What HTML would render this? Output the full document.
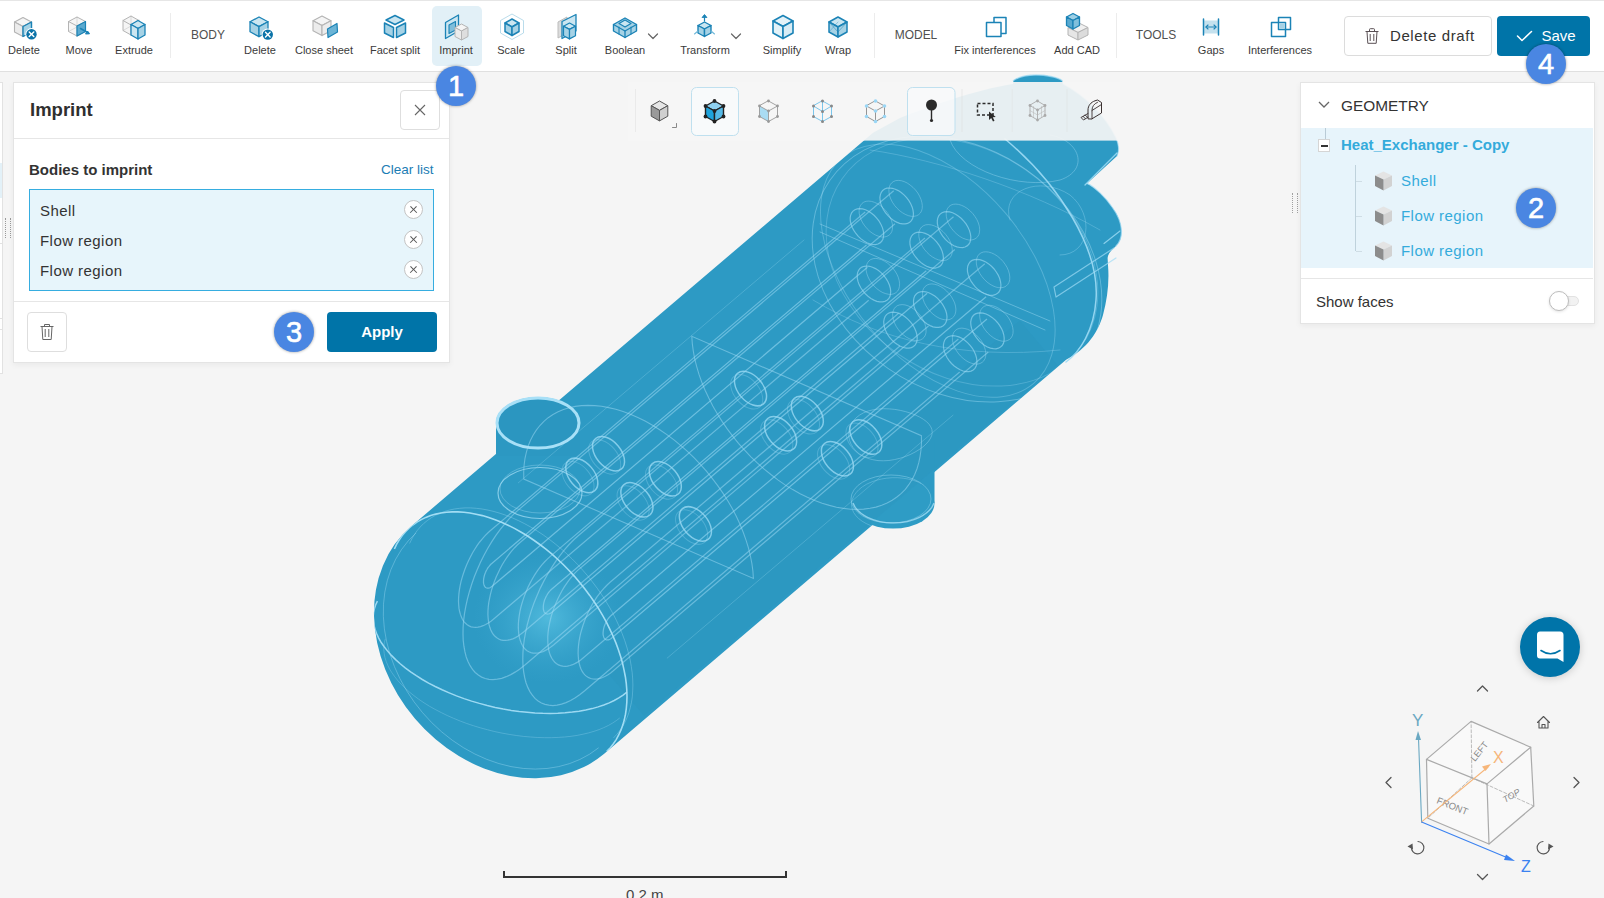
<!DOCTYPE html>
<html><head><meta charset="utf-8">
<style>
*{box-sizing:border-box;margin:0;padding:0}
html,body{width:1604px;height:898px;overflow:hidden;background:#f5f5f5;font-family:"Liberation Sans",sans-serif;color:#333}
.abs{position:absolute}
#tb{position:absolute;left:0;top:0;width:1604px;height:72px;background:#fff}
.lbl{position:absolute;top:44px;font-size:11px;color:#3a3a3a;white-space:nowrap;transform:translateX(-50%)}
.sec{position:absolute;top:27px;font-size:13px;color:#505050;white-space:nowrap;transform:translateX(-50%) scaleX(0.92)}
.sep{position:absolute;top:13px;width:1px;height:45px;background:#ececec}
.ic{position:absolute;top:13px;width:28px;height:28px;transform:translateX(-50%)}
.badge{position:absolute;width:40px;height:40px;border-radius:50%;background:#4a86e2;color:#fff;font-size:29px;text-align:center;line-height:41px;-webkit-text-stroke:0.6px #fff;box-shadow:0 0 3px rgba(0,0,0,.4)}
.item{font-size:15px;color:#333;white-space:nowrap;letter-spacing:0.45px}
.gi{font-size:15px;color:#34abdb;white-space:nowrap;letter-spacing:0.45px}
.xc{width:19px;height:19px;border:1px solid #c4c4c4;border-radius:50%;background:#fff}
.xc:before,.xc:after{content:"";position:absolute;left:4px;top:8px;width:9px;height:1.4px;background:#555;transform:rotate(45deg)}
.xc:after{transform:rotate(-45deg)}
</style></head><body>
<!-- 3D model -->
<svg class="abs" style="left:0;top:0" width="1604" height="898" id="model">
<defs>
<radialGradient id="ghi" gradientUnits="objectBoundingBox" cx="0.5" cy="0.5" r="0.5">
<stop offset="0" stop-color="#5cc4e4" stop-opacity="0.75"/><stop offset="1" stop-color="#3aa6cf" stop-opacity="0"/></radialGradient>
<clipPath id="clipbody"><path d="M410.7,526.7 L873.1,132.8 L900,118 C930,106 975,90 1013,84 L1013.5,80.5 C1020,76 1030,75 1036,75 C1045,75 1058,77 1062,80.5 L1063,84 C1085,96 1105,115 1116,138 C1119,145 1119,152 1117,156 L1087,183.4 C1095,187 1106,198 1112,207 C1118,215 1121,222 1121.5,231 C1121.5,238 1120,242 1116,246 C1112,250 1108,253 1107.6,258 L1108.3,270 C1109,285 1107,300 1103,315 C1098,332 1088,348 1066.1,359.8 L603.9,754.1 A122,149.2 -40.36 0 1 410.7,526.7 Z"/></clipPath>
</defs>
<path d="M410.7,526.7 L873.1,132.8 L900,118 C930,106 975,90 1013,84 L1013.5,80.5 C1020,76 1030,75 1036,75 C1045,75 1058,77 1062,80.5 L1063,84 C1085,96 1105,115 1116,138 C1119,145 1119,152 1117,156 L1087,183.4 C1095,187 1106,198 1112,207 C1118,215 1121,222 1121.5,231 C1121.5,238 1120,242 1116,246 C1112,250 1108,253 1107.6,258 L1108.3,270 C1109,285 1107,300 1103,315 C1098,332 1088,348 1066.1,359.8 L603.9,754.1 A122,149.2 -40.36 0 1 410.7,526.7 Z" fill="#2d9ac4"/>
<path d="M496,423 L496,456 L580,456 L580,423 Z" fill="#2c98c2"/>
<ellipse cx="538" cy="423" rx="42" ry="26" fill="#2b96c0"/>
<path d="M852,440 L934.5,440 L934.5,503 L852,503 Z" fill="#2d9ac4"/>
<ellipse cx="893" cy="503.2" rx="41.5" ry="25.4" fill="#2e9cc5"/>
<ellipse cx="548" cy="618" rx="75" ry="65" fill="url(#ghi)"/>
<path d="M644.1,715.8 L1057.2,364.8 L1019.6,320.6 L606.5,671.6 Z" fill="#258db6" opacity="0.15"/>
<g clip-path="url(#clipbody)">
<path d="M866.5,244.9 L491.5,563.7 L491.5,563.7 L490.8,564.3 L490.2,565.0 L489.5,565.8 L488.9,566.6 L488.2,567.4 L487.6,568.3 L487.1,569.3 L486.5,570.3 L486.0,571.3 L485.6,572.3 L485.1,573.4 L484.7,574.5 L484.4,575.5 L484.1,576.6 L483.9,577.7 L483.7,578.7 L483.6,579.7 L483.5,580.7 L483.5,581.6 L483.5,582.5 L483.6,583.4 L483.8,584.2 L484.0,584.9 L484.2,585.6 L484.5,586.2 L484.9,586.7 L485.3,587.2 L485.7,587.5 L486.2,587.8 L486.7,588.0 L487.2,588.2 L487.8,588.2 L488.4,588.1 L489.1,588.0 L489.7,587.8 L490.4,587.5 L491.0,587.1 L491.7,586.6 L492.4,586.1 L492.4,586.1 L867.4,267.3" fill="none" stroke="#9fdcf5" stroke-width="1.25" opacity="0.55"/>
<path d="M865.2,212.0 L490.2,530.8 L490.2,530.8 L487.5,533.2 L484.9,535.9 L482.3,538.8 L479.7,542.0 L477.2,545.4 L474.9,549.0 L472.6,552.8 L470.5,556.7 L468.5,560.7 L466.7,564.8 L465.0,569.0 L463.5,573.2 L462.2,577.4 L461.0,581.6 L460.1,585.8 L459.4,589.9 L458.9,593.9 L458.6,597.8 L458.5,601.5 L458.7,605.0 L459.0,608.4 L459.6,611.5 L460.4,614.4 L461.4,617.1 L462.5,619.5 L463.9,621.6 L465.5,623.3 L467.2,624.8 L469.1,625.9 L471.1,626.8 L473.3,627.2 L475.6,627.4 L478.0,627.2 L480.5,626.6 L483.1,625.7 L485.7,624.5 L488.3,623.0 L491.0,621.2 L493.7,619.0 L493.7,619.0 L868.7,300.2" fill="none" stroke="#9fdcf5" stroke-width="1.25" opacity="0.5"/>
<path d="M926.3,270.8 L551.3,589.6 L551.3,589.6 L550.6,590.2 L550.0,590.9 L549.3,591.6 L548.7,592.4 L548.0,593.3 L547.4,594.2 L546.9,595.2 L546.3,596.2 L545.8,597.2 L545.4,598.2 L544.9,599.3 L544.5,600.3 L544.2,601.4 L543.9,602.5 L543.7,603.5 L543.5,604.6 L543.4,605.6 L543.3,606.6 L543.3,607.5 L543.3,608.4 L543.4,609.3 L543.6,610.1 L543.8,610.8 L544.0,611.5 L544.3,612.1 L544.7,612.6 L545.1,613.0 L545.5,613.4 L546.0,613.7 L546.5,613.9 L547.0,614.0 L547.6,614.1 L548.2,614.0 L548.9,613.9 L549.5,613.7 L550.2,613.4 L550.8,613.0 L551.5,612.5 L552.2,612.0 L552.2,612.0 L927.2,293.2" fill="none" stroke="#9fdcf5" stroke-width="1.25" opacity="0.55"/>
<path d="M925.0,237.9 L550.0,556.6 L550.0,556.6 L547.3,559.1 L544.7,561.8 L542.1,564.7 L539.5,567.9 L537.0,571.3 L534.7,574.9 L532.4,578.7 L530.3,582.6 L528.3,586.6 L526.5,590.7 L524.8,594.9 L523.3,599.1 L522.0,603.3 L520.8,607.5 L519.9,611.7 L519.2,615.8 L518.7,619.8 L518.4,623.6 L518.3,627.4 L518.5,630.9 L518.8,634.3 L519.4,637.4 L520.2,640.3 L521.2,643.0 L522.3,645.3 L523.7,647.4 L525.3,649.2 L527.0,650.7 L528.9,651.8 L530.9,652.6 L533.1,653.1 L535.4,653.2 L537.8,653.0 L540.3,652.5 L542.9,651.6 L545.5,650.4 L548.1,648.9 L550.8,647.0 L553.5,644.9 L553.5,644.9 L928.5,326.1" fill="none" stroke="#9fdcf5" stroke-width="1.25" opacity="0.5"/>
<path d="M986.1,296.7 L611.1,615.5 L611.1,615.5 L610.4,616.1 L609.8,616.8 L609.1,617.5 L608.5,618.3 L607.8,619.2 L607.2,620.1 L606.7,621.1 L606.1,622.0 L605.6,623.1 L605.2,624.1 L604.7,625.2 L604.3,626.2 L604.0,627.3 L603.7,628.4 L603.5,629.4 L603.3,630.5 L603.2,631.5 L603.1,632.4 L603.1,633.4 L603.1,634.3 L603.2,635.1 L603.4,635.9 L603.6,636.7 L603.8,637.3 L604.1,637.9 L604.5,638.5 L604.9,638.9 L605.3,639.3 L605.8,639.6 L606.3,639.8 L606.8,639.9 L607.4,639.9 L608.0,639.9 L608.7,639.8 L609.3,639.5 L610.0,639.2 L610.7,638.8 L611.3,638.4 L612.0,637.8 L612.0,637.8 L987.0,319.1" fill="none" stroke="#9fdcf5" stroke-width="1.25" opacity="0.55"/>
<path d="M984.8,263.7 L609.8,582.5 L609.8,582.5 L607.1,585.0 L604.5,587.7 L601.9,590.6 L599.3,593.8 L596.8,597.2 L594.5,600.8 L592.2,604.5 L590.1,608.4 L588.1,612.5 L586.3,616.6 L584.6,620.7 L583.1,625.0 L581.8,629.2 L580.6,633.4 L579.7,637.6 L579.0,641.7 L578.5,645.6 L578.2,649.5 L578.1,653.2 L578.3,656.8 L578.6,660.2 L579.2,663.3 L580.0,666.2 L581.0,668.9 L582.1,671.2 L583.5,673.3 L585.1,675.1 L586.8,676.6 L588.7,677.7 L590.7,678.5 L592.9,679.0 L595.2,679.1 L597.6,678.9 L600.1,678.4 L602.7,677.5 L605.3,676.3 L608.0,674.8 L610.6,672.9 L613.3,670.8 L613.3,670.8 L988.3,352.0" fill="none" stroke="#9fdcf5" stroke-width="1.25" opacity="0.5"/>
<path d="M895.0,223.7 L520.1,542.5 L520.1,542.5 L517.3,545.0 L514.6,547.7 L512.0,550.7 L509.4,553.9 L506.9,557.4 L504.5,561.0 L502.2,564.8 L500.1,568.8 L498.1,572.9 L496.2,577.0 L494.5,581.3 L493.0,585.5 L491.6,589.8 L490.5,594.1 L489.6,598.3 L488.8,602.4 L488.3,606.5 L488.0,610.4 L487.9,614.2 L488.1,617.8 L488.5,621.2 L489.0,624.4 L489.8,627.3 L490.8,630.0 L492.0,632.4 L493.4,634.5 L495.0,636.3 L496.8,637.8 L498.7,639.0 L500.7,639.8 L502.9,640.3 L505.3,640.4 L507.7,640.2 L510.2,639.7 L512.8,638.8 L515.5,637.6 L518.2,636.0 L520.9,634.1 L523.6,632.0 L523.6,632.0 L898.6,313.2" fill="none" stroke="#9fdcf5" stroke-width="1.25" opacity="0.5"/>
<path d="M893.7,190.8 L518.7,509.6 L518.7,509.6 L514.0,513.9 L509.3,518.6 L504.8,523.8 L500.3,529.4 L495.9,535.4 L491.8,541.7 L487.8,548.3 L484.0,555.2 L480.5,562.3 L477.3,569.5 L474.3,576.8 L471.7,584.3 L469.4,591.7 L467.4,599.1 L465.8,606.4 L464.5,613.6 L463.6,620.7 L463.1,627.5 L463.0,634.1 L463.2,640.3 L463.9,646.2 L464.9,651.7 L466.2,656.9 L468.0,661.5 L470.1,665.7 L472.5,669.4 L475.2,672.5 L478.3,675.1 L481.6,677.1 L485.2,678.5 L489.0,679.4 L493.0,679.6 L497.3,679.2 L501.7,678.3 L506.2,676.7 L510.8,674.6 L515.5,671.9 L520.2,668.7 L524.9,664.9 L524.9,664.9 L899.9,346.1" fill="none" stroke="#9fdcf5" stroke-width="1.25" opacity="0.5"/>
<path d="M954.8,249.6 L579.9,568.4 L579.9,568.4 L577.1,570.9 L574.4,573.6 L571.8,576.6 L569.2,579.8 L566.7,583.3 L564.3,586.9 L562.0,590.7 L559.9,594.7 L557.9,598.7 L556.0,602.9 L554.3,607.1 L552.8,611.4 L551.4,615.7 L550.3,620.0 L549.4,624.2 L548.6,628.3 L548.1,632.4 L547.8,636.3 L547.8,640.1 L547.9,643.7 L548.3,647.1 L548.8,650.3 L549.6,653.2 L550.6,655.9 L551.8,658.3 L553.2,660.4 L554.8,662.2 L556.6,663.7 L558.5,664.9 L560.5,665.7 L562.7,666.2 L565.1,666.3 L567.5,666.1 L570.0,665.5 L572.6,664.7 L575.3,663.4 L578.0,661.9 L580.7,660.0 L583.4,657.8 L583.4,657.8 L958.4,339.1" fill="none" stroke="#9fdcf5" stroke-width="1.25" opacity="0.5"/>
<path d="M953.5,216.7 L578.5,535.5 L578.5,535.5 L573.8,539.7 L569.1,544.5 L564.6,549.7 L560.1,555.3 L555.7,561.3 L551.6,567.6 L547.6,574.2 L543.8,581.1 L540.3,588.1 L537.1,595.4 L534.1,602.7 L531.5,610.1 L529.2,617.6 L527.2,625.0 L525.6,632.3 L524.3,639.5 L523.4,646.6 L522.9,653.4 L522.8,659.9 L523.0,666.2 L523.7,672.1 L524.7,677.6 L526.0,682.7 L527.8,687.4 L529.9,691.6 L532.3,695.2 L535.0,698.4 L538.1,701.0 L541.4,703.0 L545.0,704.4 L548.8,705.2 L552.8,705.5 L557.1,705.1 L561.5,704.2 L566.0,702.6 L570.6,700.5 L575.3,697.8 L580.0,694.6 L584.7,690.8 L584.7,690.8 L959.7,372.0" fill="none" stroke="#9fdcf5" stroke-width="1.25" opacity="0.5"/>
<path d="M518.3,482.8 L804.0,240.0" fill="none" stroke="#9fdcf5" stroke-width="0.9" opacity="0.3" stroke-linecap="round"/>
<path d="M667.2,658.1 L953.0,415.2" fill="none" stroke="#9fdcf5" stroke-width="0.9" opacity="0.3" stroke-linecap="round"/>
<path d="M394.4,549.0 L396.7,544.2 L399.3,539.8 L402.2,535.6 L405.5,531.8 L409.0,528.2 L412.8,525.0 L416.9,522.1 L421.2,519.6 L425.8,517.4 L430.7,515.6 L435.7,514.1 L441.0,513.0 L446.5,512.2 L452.1,511.9 L457.9,511.9 L463.9,512.3 L469.9,513.0 L476.1,514.2 L482.4,515.6 L488.7,517.5 L495.1,519.7 L501.5,522.3 L508.0,525.2 L514.4,528.4 L520.8,532.0 L527.2,535.8 L533.5,540.0 L539.8,544.5 L545.9,549.2 L552.0,554.2 L557.9,559.5 L563.7,565.0 L569.3,570.7 L574.7,576.6 L579.9,582.7 L584.9,589.0 L589.7,595.4 L594.3,602.0 L598.6,608.6 L602.6,615.4 L606.4,622.2 L609.8,629.1 L613.0,636.0 L615.9,642.9 L618.4,649.8 L620.7,656.7 L622.6,663.5 L624.1,670.3 L625.4,677.0 L626.3,683.6 L626.8,690.0 L627.0,696.4 L626.8,702.5 L626.3,708.5 L625.5,714.2 L624.3,719.8 L622.8,725.1 L620.9,730.2 L618.7,735.0 L616.2,739.6 L613.4,743.8 L610.3,747.8 L606.8,751.4" fill="none" stroke="#a8e0f7" stroke-width="1.6" opacity="0.95"/>
<path d="M409.6,543.5 L411.8,539.0 L414.3,534.7 L417.1,530.7 L420.2,527.0 L423.6,523.6 L427.3,520.5 L431.2,517.8 L435.4,515.3 L439.8,513.2 L444.4,511.5 L449.3,510.1 L454.4,509.0 L459.6,508.3 L465.0,507.9 L470.6,507.9 L476.3,508.3 L482.1,509.0 L488.0,510.1 L494.0,511.5 L500.1,513.3 L506.3,515.4 L512.4,517.9 L518.6,520.7 L524.8,523.8 L531.0,527.2 L537.1,530.9 L543.2,534.9 L549.2,539.2 L555.1,543.8 L560.9,548.6 L566.6,553.6 L572.1,558.9 L577.5,564.4 L582.7,570.1 L587.7,575.9 L592.5,582.0 L597.1,588.1 L601.5,594.4 L605.6,600.8 L609.5,607.3 L613.1,613.8 L616.4,620.4 L619.5,627.1 L622.2,633.7 L624.7,640.4 L626.8,647.0 L628.6,653.5 L630.2,660.0 L631.3,666.5 L632.2,672.8 L632.7,679.0 L632.9,685.0 L632.7,690.9 L632.3,696.7 L631.5,702.2 L630.3,707.5 L628.9,712.7 L627.1,717.5 L625.0,722.2 L622.6,726.5 L619.8,730.6 L616.8,734.4 L613.5,737.9" fill="none" stroke="#9fdcf5" stroke-width="1" opacity="0.35"/>
<path d="M626.9,692.2 L623.1,695.1 L618.8,697.9 L614.2,700.5 L609.2,702.9 L603.8,705.0 L598.1,706.9 L592.1,708.6 L585.7,710.0 L579.1,711.2 L572.3,712.1 L565.1,712.8 L557.8,713.2 L550.3,713.4 L542.7,713.3 L534.9,713.0 L527.1,712.3 L519.1,711.5 L511.2,710.4 L503.2,709.0 L495.2,707.4 L487.2,705.5 L479.4,703.4 L471.6,701.1 L464.0,698.6 L456.5,695.9 L449.2,692.9 L442.1,689.8 L435.2,686.5 L428.6,683.1 L422.3,679.5 L416.3,675.7 L410.6,671.9 L405.2,667.9 L400.2,663.8 L395.6,659.6 L391.4,655.4 L387.6,651.1 L384.2,646.8 L381.2,642.5 L378.7,638.1 L376.7,633.8 L375.1,629.4 L374.0,625.2 L373.4,620.9 L373.2,616.8 L373.6,612.7 L374.4,608.7 L375.6,604.9 L377.4,601.1" fill="none" stroke="#a8e0f7" stroke-width="1.5" opacity="0.9"/>
<path d="M619.7,718.0 L616.3,720.6 L612.5,723.1 L608.3,725.5 L603.9,727.6 L599.1,729.6 L594.0,731.3 L588.6,732.9 L583.0,734.2 L577.1,735.4 L571.0,736.3 L564.6,737.0 L558.1,737.4 L551.5,737.7 L544.6,737.7 L537.7,737.5 L530.6,737.0 L523.5,736.4 L516.4,735.5 L509.2,734.4 L502.0,733.1 L494.8,731.6 L487.7,729.8 L480.6,727.9 L473.7,725.8 L466.8,723.5 L460.1,721.0 L453.6,718.3 L447.2,715.5 L441.1,712.5 L435.1,709.4 L429.4,706.2 L424.0,702.8 L418.8,699.3 L414.0,695.7 L409.5,692.1 L405.3,688.3 L401.4,684.5 L397.9,680.7 L394.8,676.8 L392.0,672.9 L389.6,669.0 L387.7,665.1 L386.1,661.2 L384.9,657.3 L384.2,653.5 L383.8,649.7 L383.9,646.0 L384.4,642.4 L385.3,638.8" fill="none" stroke="#9fdcf5" stroke-width="1" opacity="0.3"/>
<path d="M598.6,747.8 A114,141 -40.36 0 1 416.0,533.0" fill="none" stroke="#9fdcf5" stroke-width="1" opacity="0.4"/>
<path d="M753.4,578.5 L752.9,571.1 L751.9,563.6 L750.4,556.0 L748.5,548.2 L746.1,540.3 L743.3,532.5 L740.1,524.5 L736.4,516.6 L732.4,508.8 L727.9,501.0 L723.1,493.4 L717.9,485.9 L712.4,478.6 L706.6,471.4 L700.6,464.6 L694.2,457.9 L687.7,451.6 L680.9,445.6 L674.0,439.9 L666.9,434.6 L659.7,429.7 L652.5,425.2 L645.1,421.1 L637.8,417.5 L630.4,414.3 L623.1,411.6 L615.8,409.3 L608.6,407.6 L601.6,406.3 L594.7,405.6 L588.0,405.4 L581.5,405.6 L575.2,406.4 L569.2,407.7 L563.5,409.5 L558.1,411.8 L553.0,414.5 L548.2,417.7 L543.9,421.4 L539.9,425.5 L536.3,430.1 L533.2,435.0 L530.5,440.3 L528.2,446.0 L526.4,452.1 L525.0,458.4 L524.1,465.1 L523.7,472.0 L523.8,479.1 Z" fill="none" stroke="#9fdcf5" stroke-width="1.1" opacity="0.5"/>
<path d="M691.8,336.3 L692.3,343.6 L693.3,351.1 L694.7,358.8 L696.7,366.6 L699.0,374.4 L701.8,382.3 L705.1,390.2 L708.8,398.1 L712.8,406.0 L717.3,413.7 L722.1,421.4 L727.2,428.9 L732.7,436.2 L738.5,443.3 L744.6,450.2 L750.9,456.8 L757.5,463.2 L764.2,469.2 L771.2,474.8 L778.2,480.1 L785.4,485.1 L792.7,489.6 L800.1,493.7 L807.4,497.3 L814.8,500.5 L822.1,503.2 L829.4,505.4 L836.5,507.2 L843.6,508.4 L850.5,509.2 L857.2,509.4 L863.7,509.1 L870.0,508.3 L876.0,507.1 L881.7,505.3 L887.1,503.0 L892.2,500.3 L896.9,497.0 L901.3,493.4 L905.3,489.3 L908.8,484.7 L912.0,479.8 L914.7,474.4 L917.0,468.7 L918.8,462.7 L920.1,456.3 L921.0,449.7 L921.5,442.8 L921.4,435.7 Z" fill="none" stroke="#9fdcf5" stroke-width="1.1" opacity="0.5"/>
<path d="M915.5,415.1 L919.7,417.1 L923.4,419.3 L926.6,421.7 L929.0,424.2 L930.8,426.8 L931.9,429.5 L932.2,432.3 L931.8,435.2 L930.6,438.1 L928.7,441.0 L926.2,443.9 L923.0,446.8 L919.3,449.5 L915.0,452.1 L910.3,454.5 L905.2,456.6 L899.9,458.3 L894.4,459.6 L888.9,460.5 L883.4,460.8 L878.0,460.6 L872.8,459.7 L867.9,458.4 L863.4,456.4 L859.4,454.0 L856.0,451.0 L853.2,447.7 L851.0,444.1 L849.5,440.2 L848.8,436.2 L848.8,432.1 L849.5,428.2 L851.0,424.4 L853.2,420.9 L856.1,417.8 L859.5,415.1 L863.6,412.8 L868.1,411.0 L873.0,409.8 L878.3,409.0 L883.7,408.7 L889.3,408.9 L894.9,409.4 L900.4,410.4 L905.8,411.7 L910.8,413.2 L915.5,415.1" fill="none" stroke="#9fdcf5" stroke-width="1" opacity="0.4"/>
<path d="M918.2,482.1 L922.4,484.3 L926.1,486.7 L929.3,489.5 L931.8,492.5 L933.6,495.7 L934.7,499.0 L935.0,502.4 L934.6,505.9 L933.5,509.2 L931.6,512.5 L929.1,515.6 L925.9,518.5 L922.1,521.2 L917.8,523.5 L913.1,525.4 L908.1,527.0 L902.7,528.1 L897.2,528.8 L891.6,529.0 L886.1,528.8 L880.7,528.1 L875.5,527.0 L870.6,525.5 L866.1,523.5 L862.1,521.2 L858.7,518.6 L855.9,515.7 L853.7,512.6 L852.3,509.3 L851.6,506.0 L851.6,502.5 L852.4,499.1 L853.9,495.8 L856.1,492.6 L858.9,489.6 L862.4,486.8 L866.4,484.3 L871.0,482.2 L875.9,480.4 L881.1,479.1 L886.5,478.2 L892.1,477.7 L897.6,477.7 L903.1,478.2 L908.4,479.1 L913.5,480.4 L918.2,482.1" fill="none" stroke="#9fdcf5" stroke-width="1" opacity="0.35"/>
<ellipse cx="608.5" cy="453.7" rx="20.0" ry="12.4" transform="rotate(49.64 608.5 453.7)" fill="none" stroke="#9fdcf5" stroke-width="1.5" opacity="0.75"/>
<ellipse cx="604.7" cy="456.9" rx="20.0" ry="12.4" transform="rotate(49.64 604.7 456.9)" fill="none" stroke="#9fdcf5" stroke-width="1" opacity="0.3"/>
<ellipse cx="581.8" cy="475.4" rx="20.0" ry="12.4" transform="rotate(49.64 581.8 475.4)" fill="none" stroke="#9fdcf5" stroke-width="1.5" opacity="0.75"/>
<ellipse cx="578.0" cy="478.6" rx="20.0" ry="12.4" transform="rotate(49.64 578.0 478.6)" fill="none" stroke="#9fdcf5" stroke-width="1" opacity="0.3"/>
<ellipse cx="665.3" cy="478.8" rx="20.0" ry="12.4" transform="rotate(49.64 665.3 478.8)" fill="none" stroke="#9fdcf5" stroke-width="1.5" opacity="0.75"/>
<ellipse cx="661.5" cy="482.0" rx="20.0" ry="12.4" transform="rotate(49.64 661.5 482.0)" fill="none" stroke="#9fdcf5" stroke-width="1" opacity="0.3"/>
<ellipse cx="636.9" cy="499.8" rx="20.0" ry="12.4" transform="rotate(49.64 636.9 499.8)" fill="none" stroke="#9fdcf5" stroke-width="1.5" opacity="0.75"/>
<ellipse cx="633.1" cy="503.0" rx="20.0" ry="12.4" transform="rotate(49.64 633.1 503.0)" fill="none" stroke="#9fdcf5" stroke-width="1" opacity="0.3"/>
<ellipse cx="695.4" cy="523.9" rx="20.0" ry="12.4" transform="rotate(49.64 695.4 523.9)" fill="none" stroke="#9fdcf5" stroke-width="1.5" opacity="0.75"/>
<ellipse cx="691.6" cy="527.1" rx="20.0" ry="12.4" transform="rotate(49.64 691.6 527.1)" fill="none" stroke="#9fdcf5" stroke-width="1" opacity="0.3"/>
<ellipse cx="750.5" cy="388.6" rx="20.0" ry="12.4" transform="rotate(49.64 750.5 388.6)" fill="none" stroke="#9fdcf5" stroke-width="1.5" opacity="0.75"/>
<ellipse cx="746.7" cy="391.8" rx="20.0" ry="12.4" transform="rotate(49.64 746.7 391.8)" fill="none" stroke="#9fdcf5" stroke-width="1" opacity="0.3"/>
<ellipse cx="807.3" cy="413.6" rx="20.0" ry="12.4" transform="rotate(49.64 807.3 413.6)" fill="none" stroke="#9fdcf5" stroke-width="1.5" opacity="0.75"/>
<ellipse cx="803.5" cy="416.8" rx="20.0" ry="12.4" transform="rotate(49.64 803.5 416.8)" fill="none" stroke="#9fdcf5" stroke-width="1" opacity="0.3"/>
<ellipse cx="780.6" cy="433.7" rx="20.0" ry="12.4" transform="rotate(49.64 780.6 433.7)" fill="none" stroke="#9fdcf5" stroke-width="1.5" opacity="0.75"/>
<ellipse cx="776.8" cy="436.9" rx="20.0" ry="12.4" transform="rotate(49.64 776.8 436.9)" fill="none" stroke="#9fdcf5" stroke-width="1" opacity="0.3"/>
<ellipse cx="837.4" cy="458.7" rx="20.0" ry="12.4" transform="rotate(49.64 837.4 458.7)" fill="none" stroke="#9fdcf5" stroke-width="1.5" opacity="0.75"/>
<ellipse cx="833.6" cy="461.9" rx="20.0" ry="12.4" transform="rotate(49.64 833.6 461.9)" fill="none" stroke="#9fdcf5" stroke-width="1" opacity="0.3"/>
<ellipse cx="865.8" cy="437.0" rx="20.0" ry="12.4" transform="rotate(49.64 865.8 437.0)" fill="none" stroke="#9fdcf5" stroke-width="1.5" opacity="0.75"/>
<ellipse cx="862.0" cy="440.2" rx="20.0" ry="12.4" transform="rotate(49.64 862.0 440.2)" fill="none" stroke="#9fdcf5" stroke-width="1" opacity="0.3"/>
<ellipse cx="957" cy="269" rx="155" ry="121" transform="rotate(34.8 957 269)" fill="none" stroke="#9fdcf5" stroke-width="1" opacity="0.45"/>
<ellipse cx="962" cy="262" rx="146" ry="112" transform="rotate(34.8 962 262)" fill="none" stroke="#9fdcf5" stroke-width="1" opacity="0.3"/>
<ellipse cx="937.8" cy="270.7" rx="148.0" ry="88.8" transform="rotate(49.64 937.8 270.7)" fill="none" stroke="#9fdcf5" stroke-width="1.0" opacity="0.35"/>
<path d="M883.7,233.9 L883.3,230.8 L882.4,227.6 L881.0,224.4 L879.1,221.2 L876.9,218.3 L874.3,215.5 L871.5,213.2 L868.5,211.3 L865.5,209.8 L862.6,208.9 L859.8,208.6 L857.2,208.9 L854.9,209.7 L853.0,211.1 L851.6,212.9 L850.6,215.3 L850.2,217.9 L850.3,220.9 L851.0,224.0 L852.1,227.2 L853.8,230.4 L855.9,233.5 L858.3,236.4 L861.0,238.9 L863.9,241.1 L866.9,242.8 L869.8,243.9 L872.8,244.5 L875.5,244.6 L877.9,244.0 L880.0,242.9 L881.7,241.3 L882.9,239.2 L883.5,236.7 L883.7,233.9Z" fill="none" stroke="#9fdcf5" stroke-width="1.2" opacity="0.6"/>
<path d="M892.6,226.3 L892.2,223.2 L891.3,220.0 L889.9,216.8 L888.0,213.7 L885.8,210.7 L883.2,208.0 L880.4,205.6 L877.5,203.7 L874.4,202.3 L871.5,201.4 L868.7,201.1 L866.1,201.3 L863.8,202.1 L861.9,203.5 L860.5,205.4 L859.5,207.7 L859.1,210.4 L859.2,213.3 L859.9,216.4 L861.1,219.7 L862.7,222.9 L864.8,225.9 L867.2,228.8 L869.9,231.4 L872.8,233.5 L875.8,235.2 L878.8,236.3 L881.7,237.0 L884.4,237.0 L886.8,236.4 L888.9,235.3 L890.6,233.7 L891.8,231.6 L892.4,229.1 L892.6,226.3Z" fill="none" stroke="#9fdcf5" stroke-width="1" opacity="0.4"/>
<path d="M913.4,213.2 L913.0,210.1 L912.1,206.9 L910.7,203.7 L908.9,200.6 L906.6,197.6 L904.0,194.9 L901.2,192.5 L898.3,190.6 L895.3,189.2 L892.3,188.3 L889.5,188.0 L886.9,188.2 L884.6,189.0 L882.7,190.4 L881.3,192.3 L880.4,194.6 L879.9,197.3 L880.1,200.2 L880.7,203.4 L881.9,206.6 L883.5,209.8 L885.6,212.9 L888.0,215.7 L890.7,218.3 L893.6,220.4 L896.6,222.1 L899.6,223.3 L902.5,223.9 L905.2,223.9 L907.6,223.4 L909.7,222.2 L911.4,220.6 L912.6,218.5 L913.3,216.0 L913.4,213.2Z" fill="none" stroke="#9fdcf5" stroke-width="1.2" opacity="0.6"/>
<path d="M922.3,205.6 L921.9,202.6 L921.0,199.4 L919.6,196.2 L917.8,193.0 L915.5,190.0 L912.9,187.3 L910.1,185.0 L907.2,183.0 L904.2,181.6 L901.2,180.7 L898.4,180.4 L895.8,180.6 L893.5,181.5 L891.7,182.8 L890.2,184.7 L889.3,187.0 L888.9,189.7 L889.0,192.6 L889.6,195.8 L890.8,199.0 L892.4,202.2 L894.5,205.3 L896.9,208.1 L899.6,210.7 L902.5,212.8 L905.5,214.5 L908.5,215.7 L911.4,216.3 L914.1,216.3 L916.5,215.8 L918.6,214.7 L920.3,213.1 L921.5,211.0 L922.2,208.5 L922.3,205.6Z" fill="none" stroke="#9fdcf5" stroke-width="1" opacity="0.4"/>
<path d="M943.4,257.4 L943.0,254.3 L942.1,251.1 L940.7,247.9 L938.8,244.8 L936.6,241.8 L934.0,239.1 L931.2,236.7 L928.3,234.8 L925.2,233.4 L922.3,232.5 L919.5,232.2 L916.9,232.4 L914.6,233.2 L912.7,234.6 L911.3,236.5 L910.3,238.8 L909.9,241.5 L910.0,244.4 L910.7,247.5 L911.9,250.8 L913.5,254.0 L915.6,257.0 L918.0,259.9 L920.7,262.4 L923.6,264.6 L926.6,266.3 L929.6,267.4 L932.5,268.1 L935.2,268.1 L937.6,267.5 L939.7,266.4 L941.4,264.8 L942.6,262.7 L943.2,260.2 L943.4,257.4Z" fill="none" stroke="#9fdcf5" stroke-width="1.2" opacity="0.6"/>
<path d="M952.3,249.8 L951.9,246.8 L951.0,243.6 L949.6,240.3 L947.7,237.2 L945.5,234.2 L942.9,231.5 L940.1,229.1 L937.2,227.2 L934.2,225.8 L931.2,224.9 L928.4,224.6 L925.8,224.8 L923.5,225.7 L921.6,227.0 L920.2,228.9 L919.2,231.2 L918.8,233.9 L918.9,236.8 L919.6,240.0 L920.8,243.2 L922.4,246.4 L924.5,249.5 L926.9,252.3 L929.6,254.9 L932.5,257.0 L935.5,258.7 L938.5,259.9 L941.4,260.5 L944.1,260.5 L946.5,260.0 L948.6,258.9 L950.3,257.2 L951.5,255.1 L952.2,252.6 L952.3,249.8Z" fill="none" stroke="#9fdcf5" stroke-width="1" opacity="0.4"/>
<path d="M970.8,236.9 L970.4,233.8 L969.5,230.6 L968.1,227.4 L966.2,224.2 L964.0,221.3 L961.4,218.5 L958.6,216.2 L955.6,214.3 L952.6,212.8 L949.7,211.9 L946.9,211.6 L944.3,211.9 L942.0,212.7 L940.1,214.1 L938.7,215.9 L937.7,218.3 L937.3,220.9 L937.4,223.9 L938.1,227.0 L939.2,230.2 L940.9,233.4 L942.9,236.5 L945.4,239.4 L948.1,241.9 L951.0,244.1 L953.9,245.8 L956.9,246.9 L959.8,247.5 L962.6,247.6 L965.0,247.0 L967.1,245.9 L968.8,244.3 L970.0,242.2 L970.6,239.7 L970.8,236.9Z" fill="none" stroke="#9fdcf5" stroke-width="1.2" opacity="0.6"/>
<path d="M979.7,229.3 L979.3,226.2 L978.4,223.0 L977.0,219.8 L975.1,216.7 L972.9,213.7 L970.3,211.0 L967.5,208.6 L964.5,206.7 L961.5,205.3 L958.6,204.4 L955.8,204.1 L953.2,204.3 L950.9,205.1 L949.0,206.5 L947.6,208.4 L946.6,210.7 L946.2,213.4 L946.3,216.3 L947.0,219.4 L948.1,222.7 L949.8,225.9 L951.9,228.9 L954.3,231.8 L957.0,234.3 L959.9,236.5 L962.9,238.2 L965.9,239.3 L968.8,240.0 L971.5,240.0 L973.9,239.4 L976.0,238.3 L977.7,236.7 L978.9,234.6 L979.5,232.1 L979.7,229.3Z" fill="none" stroke="#9fdcf5" stroke-width="1" opacity="0.4"/>
<path d="M890.7,291.2 L890.3,288.2 L889.4,285.0 L888.0,281.8 L886.1,278.6 L883.9,275.6 L881.3,272.9 L878.5,270.6 L875.5,268.6 L872.5,267.2 L869.6,266.3 L866.8,266.0 L864.2,266.3 L861.9,267.1 L860.0,268.5 L858.6,270.3 L857.6,272.6 L857.2,275.3 L857.3,278.3 L858.0,281.4 L859.1,284.6 L860.8,287.8 L862.9,290.9 L865.3,293.8 L868.0,296.3 L870.9,298.4 L873.9,300.1 L876.8,301.3 L879.7,301.9 L882.5,301.9 L884.9,301.4 L887.0,300.3 L888.7,298.7 L889.9,296.6 L890.5,294.1 L890.7,291.2Z" fill="none" stroke="#9fdcf5" stroke-width="1.2" opacity="0.6"/>
<path d="M899.6,283.7 L899.2,280.6 L898.3,277.4 L896.9,274.2 L895.0,271.0 L892.8,268.1 L890.2,265.4 L887.4,263.0 L884.4,261.1 L881.4,259.6 L878.5,258.8 L875.7,258.4 L873.1,258.7 L870.8,259.5 L868.9,260.9 L867.5,262.8 L866.5,265.1 L866.1,267.7 L866.2,270.7 L866.9,273.8 L868.1,277.0 L869.7,280.2 L871.8,283.3 L874.2,286.2 L876.9,288.7 L879.8,290.9 L882.8,292.6 L885.8,293.7 L888.7,294.3 L891.4,294.4 L893.8,293.8 L895.9,292.7 L897.6,291.1 L898.8,289.0 L899.4,286.5 L899.6,283.7Z" fill="none" stroke="#9fdcf5" stroke-width="1" opacity="0.4"/>
<path d="M1000.9,284.6 L1000.5,281.5 L999.6,278.3 L998.2,275.1 L996.3,272.0 L994.1,269.0 L991.5,266.3 L988.7,263.9 L985.8,262.0 L982.7,260.6 L979.8,259.7 L977.0,259.3 L974.4,259.6 L972.1,260.4 L970.2,261.8 L968.8,263.7 L967.8,266.0 L967.4,268.7 L967.5,271.6 L968.2,274.7 L969.4,278.0 L971.0,281.2 L973.1,284.2 L975.5,287.1 L978.2,289.6 L981.1,291.8 L984.1,293.5 L987.1,294.6 L990.0,295.3 L992.7,295.3 L995.1,294.7 L997.2,293.6 L998.9,292.0 L1000.1,289.9 L1000.8,287.4 L1000.9,284.6Z" fill="none" stroke="#9fdcf5" stroke-width="1.2" opacity="0.6"/>
<path d="M1009.8,277.0 L1009.4,274.0 L1008.5,270.8 L1007.1,267.5 L1005.2,264.4 L1003.0,261.4 L1000.4,258.7 L997.6,256.3 L994.7,254.4 L991.7,253.0 L988.7,252.1 L985.9,251.8 L983.3,252.0 L981.0,252.9 L979.1,254.2 L977.7,256.1 L976.8,258.4 L976.3,261.1 L976.4,264.0 L977.1,267.2 L978.3,270.4 L979.9,273.6 L982.0,276.7 L984.4,279.5 L987.1,282.1 L990.0,284.2 L993.0,285.9 L996.0,287.1 L998.9,287.7 L1001.6,287.7 L1004.0,287.2 L1006.1,286.1 L1007.8,284.4 L1009.0,282.3 L1009.7,279.8 L1009.8,277.0Z" fill="none" stroke="#9fdcf5" stroke-width="1" opacity="0.4"/>
<path d="M947.0,316.8 L946.6,313.7 L945.7,310.5 L944.2,307.3 L942.4,304.1 L940.1,301.1 L937.6,298.4 L934.8,296.1 L931.8,294.2 L928.8,292.7 L925.8,291.8 L923.0,291.5 L920.4,291.8 L918.2,292.6 L916.3,294.0 L914.8,295.8 L913.9,298.1 L913.5,300.8 L913.6,303.8 L914.2,306.9 L915.4,310.1 L917.0,313.3 L919.1,316.4 L921.5,319.3 L924.2,321.8 L927.1,324.0 L930.1,325.6 L933.1,326.8 L936.0,327.4 L938.7,327.4 L941.2,326.9 L943.2,325.8 L944.9,324.2 L946.1,322.1 L946.8,319.6 L947.0,316.8Z" fill="none" stroke="#9fdcf5" stroke-width="1.2" opacity="0.6"/>
<path d="M955.9,309.2 L955.5,306.1 L954.6,302.9 L953.1,299.7 L951.3,296.5 L949.0,293.6 L946.5,290.9 L943.7,288.5 L940.7,286.6 L937.7,285.1 L934.7,284.3 L931.9,283.9 L929.3,284.2 L927.1,285.0 L925.2,286.4 L923.7,288.3 L922.8,290.6 L922.4,293.2 L922.5,296.2 L923.1,299.3 L924.3,302.6 L926.0,305.8 L928.0,308.8 L930.4,311.7 L933.1,314.2 L936.0,316.4 L939.0,318.1 L942.0,319.2 L944.9,319.8 L947.6,319.9 L950.1,319.3 L952.2,318.2 L953.8,316.6 L955.0,314.5 L955.7,312.0 L955.9,309.2Z" fill="none" stroke="#9fdcf5" stroke-width="1" opacity="0.4"/>
<path d="M917.2,337.4 L916.8,334.4 L915.9,331.2 L914.5,327.9 L912.7,324.8 L910.4,321.8 L907.8,319.1 L905.0,316.7 L902.1,314.8 L899.1,313.4 L896.1,312.5 L893.3,312.2 L890.7,312.4 L888.4,313.3 L886.5,314.6 L885.1,316.5 L884.2,318.8 L883.7,321.5 L883.9,324.4 L884.5,327.6 L885.7,330.8 L887.3,334.0 L889.4,337.1 L891.8,339.9 L894.5,342.5 L897.4,344.6 L900.4,346.3 L903.4,347.5 L906.3,348.1 L909.0,348.1 L911.4,347.6 L913.5,346.5 L915.2,344.8 L916.4,342.7 L917.1,340.2 L917.2,337.4Z" fill="none" stroke="#9fdcf5" stroke-width="1.2" opacity="0.6"/>
<path d="M926.1,329.8 L925.7,326.8 L924.8,323.6 L923.4,320.4 L921.6,317.2 L919.3,314.2 L916.7,311.5 L913.9,309.2 L911.0,307.2 L908.0,305.8 L905.0,304.9 L902.2,304.6 L899.6,304.9 L897.3,305.7 L895.4,307.1 L894.0,308.9 L893.1,311.2 L892.6,313.9 L892.8,316.9 L893.4,320.0 L894.6,323.2 L896.2,326.4 L898.3,329.5 L900.7,332.4 L903.4,334.9 L906.3,337.1 L909.3,338.7 L912.3,339.9 L915.2,340.5 L917.9,340.5 L920.3,340.0 L922.4,338.9 L924.1,337.3 L925.3,335.2 L926.0,332.7 L926.1,329.8Z" fill="none" stroke="#9fdcf5" stroke-width="1" opacity="0.4"/>
<path d="M1004.2,338.1 L1003.8,335.0 L1002.9,331.8 L1001.5,328.6 L999.6,325.4 L997.4,322.5 L994.8,319.7 L992.0,317.4 L989.1,315.5 L986.1,314.0 L983.1,313.1 L980.3,312.8 L977.7,313.1 L975.4,313.9 L973.5,315.3 L972.1,317.1 L971.2,319.5 L970.7,322.1 L970.9,325.1 L971.5,328.2 L972.7,331.4 L974.3,334.6 L976.4,337.7 L978.8,340.6 L981.5,343.1 L984.4,345.3 L987.4,347.0 L990.4,348.1 L993.3,348.7 L996.0,348.8 L998.4,348.2 L1000.5,347.1 L1002.2,345.5 L1003.4,343.4 L1004.1,340.9 L1004.2,338.1Z" fill="none" stroke="#9fdcf5" stroke-width="1.2" opacity="0.6"/>
<path d="M1013.1,330.5 L1012.7,327.4 L1011.8,324.2 L1010.4,321.0 L1008.6,317.9 L1006.3,314.9 L1003.7,312.2 L1000.9,309.8 L998.0,307.9 L995.0,306.5 L992.0,305.6 L989.2,305.2 L986.6,305.5 L984.3,306.3 L982.4,307.7 L981.0,309.6 L980.1,311.9 L979.6,314.6 L979.8,317.5 L980.4,320.6 L981.6,323.9 L983.2,327.1 L985.3,330.1 L987.7,333.0 L990.4,335.5 L993.3,337.7 L996.3,339.4 L999.3,340.5 L1002.2,341.2 L1004.9,341.2 L1007.3,340.6 L1009.4,339.5 L1011.1,337.9 L1012.3,335.8 L1013.0,333.3 L1013.1,330.5Z" fill="none" stroke="#9fdcf5" stroke-width="1" opacity="0.4"/>
<path d="M976.9,360.9 L976.5,357.9 L975.6,354.7 L974.2,351.5 L972.4,348.3 L970.1,345.3 L967.5,342.6 L964.7,340.3 L961.8,338.3 L958.8,336.9 L955.8,336.0 L953.0,335.7 L950.4,336.0 L948.1,336.8 L946.2,338.2 L944.8,340.0 L943.9,342.3 L943.4,345.0 L943.6,348.0 L944.2,351.1 L945.4,354.3 L947.0,357.5 L949.1,360.6 L951.5,363.5 L954.2,366.0 L957.1,368.1 L960.1,369.8 L963.1,371.0 L966.0,371.6 L968.7,371.6 L971.1,371.1 L973.2,370.0 L974.9,368.4 L976.1,366.3 L976.8,363.8 L976.9,360.9Z" fill="none" stroke="#9fdcf5" stroke-width="1.2" opacity="0.6"/>
<path d="M985.8,353.4 L985.4,350.3 L984.5,347.1 L983.1,343.9 L981.3,340.7 L979.0,337.8 L976.4,335.1 L973.6,332.7 L970.7,330.8 L967.7,329.3 L964.7,328.5 L961.9,328.1 L959.3,328.4 L957.0,329.2 L955.2,330.6 L953.7,332.5 L952.8,334.8 L952.4,337.4 L952.5,340.4 L953.1,343.5 L954.3,346.7 L955.9,349.9 L958.0,353.0 L960.4,355.9 L963.1,358.4 L966.0,360.6 L969.0,362.3 L972.0,363.4 L974.9,364.0 L977.6,364.1 L980.0,363.5 L982.1,362.4 L983.8,360.8 L985.0,358.7 L985.7,356.2 L985.8,353.4Z" fill="none" stroke="#9fdcf5" stroke-width="1" opacity="0.4"/>
<path d="M820,224 L1050,321 M820,232 L1045,330" fill="none" stroke="#9fdcf5" stroke-width="1" opacity="0.45" stroke-linecap="round"/>
<path d="M813,300 C880,340 960,360 1060,350" fill="none" stroke="#9fdcf5" stroke-width="1" opacity="0.3" stroke-linecap="round"/>
<path d="M870,150 C940,160 1030,190 1100,230" fill="none" stroke="#9fdcf5" stroke-width="1" opacity="0.3" stroke-linecap="round"/>
<path d="M950,140 C960,170 1020,190 1060,180 C1090,170 1080,140 1050,135" fill="none" stroke="#9fdcf5" stroke-width="1" opacity="0.4" stroke-linecap="round"/>
<path d="M1010,220 C1000,190 1040,175 1070,195 C1095,215 1090,255 1060,255" fill="none" stroke="#9fdcf5" stroke-width="1" opacity="0.35" stroke-linecap="round"/>
</g>
<path d="M1005,139 C1060,185 1100,250 1096,300 C1094,330 1080,352 1066,362" fill="none" stroke="#9fdcf5" stroke-width="1.5" opacity="0.9" stroke-linecap="round"/>
<path d="M1054,287 L1114,248 M1056,297 L1116,258 M1054,287 L1056,297" fill="none" stroke="#9fdcf5" stroke-width="1.2" opacity="0.7" stroke-linecap="round"/>
<path d="M1085,185 L1117,153" fill="none" stroke="#9fdcf5" stroke-width="1.3" opacity="0.85" stroke-linecap="round"/>
<path d="M1104,243.5 L1120,231" fill="none" stroke="#9fdcf5" stroke-width="1.2" opacity="0.8" stroke-linecap="round"/>
<path d="M1087,183.4 C1095,187 1106,198 1112,207 C1118,215 1121,222 1121.5,231 C1121.5,238 1120,242 1116,246" fill="none" stroke="#9fdcf5" stroke-width="1.2" opacity="0.7" stroke-linecap="round"/>
<path d="M1063,84 C1085,96 1105,115 1116,138 C1119,145 1119,152 1117,156" fill="none" stroke="#9fdcf5" stroke-width="1.2" opacity="0.6" stroke-linecap="round"/>
<path d="M1013.5,80.5 C1020,76 1030,75 1036,75 C1045,75 1058,77 1062,80.5" fill="none" stroke="#9fdcf5" stroke-width="1.5" opacity="0.7" stroke-linecap="round"/>
<ellipse cx="538" cy="423" rx="41" ry="25" fill="none" stroke="#a8e0f7" stroke-width="3"/>
<ellipse cx="540" cy="493" rx="42" ry="25.5" fill="none" stroke="#a8e0f7" stroke-width="1.2" opacity="0.7"/>
<ellipse cx="540" cy="489" rx="40" ry="24" fill="none" stroke="#a8e0f7" stroke-width="1" opacity="0.35"/>
<path d="M853,503 A41.5,25.4 0 0 0 934,503" fill="none" stroke="#a8e0f7" stroke-width="1.4" opacity="0.75"/>
<ellipse cx="891" cy="499" rx="40" ry="24" fill="none" stroke="#a8e0f7" stroke-width="1" opacity="0.4"/>
</svg>

<!-- view toolbar -->
<svg class="abs" style="left:0;top:0" width="1604" height="898"><rect x="628" y="82" width="492" height="58.6" fill="rgba(245,245,245,0.93)"/>
<rect x="635" y="89" width="1" height="43" fill="#dedede" opacity="0.5"/>
<rect x="961.5" y="89" width="1" height="43" fill="#dedede" opacity="0.6"/>
<rect x="1011.7" y="89" width="1" height="43" fill="#dedede" opacity="0.4"/>
<rect x="1066.5" y="89" width="1" height="43" fill="#dedede" opacity="0.4"/>
<rect x="691.5" y="87.5" width="47" height="48" rx="5" fill="#f8fafb" stroke="#bfe0ef" stroke-width="1"/>
<rect x="907.5" y="87.5" width="47.5" height="48" rx="5" fill="rgba(250,251,252,0.7)" stroke="#bfe0ef" stroke-width="1"/>
<path d="M659.5,101.0 L667.8,105.7 L659.5,110.4 L651.2,105.7Z" fill="#e6e6e6" stroke="#555" stroke-width="1" stroke-linejoin="round" />
<path d="M651.2,105.7 L659.5,110.4 L659.5,120.9 L651.2,116.2Z" fill="#9a9a9a" stroke="#555" stroke-width="1" stroke-linejoin="round" />
<path d="M659.5,110.4 L667.8,105.7 L667.8,116.2 L659.5,120.9Z" fill="#cfcfcf" stroke="#555" stroke-width="1" stroke-linejoin="round" />
<path d="M672.5,127.5 H676.5 V123.5" fill="none" stroke="#888" stroke-width="1" stroke-linecap="round" stroke-linejoin="round" />
<path d="M714.5,101.0 L723.5,106.0 L714.5,111.0 L705.5,106.0Z" fill="#8fd0ef" stroke="#222" stroke-width="1.4" stroke-linejoin="round" />
<path d="M705.5,106.0 L714.5,111.0 L714.5,121.5 L705.5,116.5Z" fill="#1ea3dc" stroke="#222" stroke-width="1.4" stroke-linejoin="round" />
<path d="M714.5,111.0 L723.5,106.0 L723.5,116.5 L714.5,121.5Z" fill="#55b9e6" stroke="#222" stroke-width="1.4" stroke-linejoin="round" />
<circle cx="714.5" cy="101" r="1.9" fill="#222"/>
<circle cx="705.5" cy="106" r="1.9" fill="#222"/>
<circle cx="714.5" cy="111" r="1.9" fill="#222"/>
<circle cx="723.5" cy="106" r="1.9" fill="#222"/>
<circle cx="705.5" cy="116.5" r="1.9" fill="#222"/>
<circle cx="714.5" cy="121.5" r="1.9" fill="#222"/>
<circle cx="723.5" cy="116.5" r="1.9" fill="#222"/>
<path d="M759.5,106.0 L768.5,111.0 L768.5,121.5 L759.5,116.5Z" fill="#a9dcf3" stroke="none" stroke-width="1" stroke-linejoin="round" />
<path d="M768.5,101.0 L777.5,106.0 L777.5,116.5 L768.5,121.5 L759.5,116.5 L759.5,106.0Z" fill="none" stroke="#999" stroke-width="0.9" stroke-linecap="round" stroke-linejoin="round" />
<path d="M759.5,106.0 L768.5,111.0 L777.5,106.0" fill="none" stroke="#999" stroke-width="0.9" stroke-linecap="round" stroke-linejoin="round" />
<path d="M768.5,111.0 L768.5,121.5" fill="none" stroke="#999" stroke-width="0.9" stroke-linecap="round" stroke-linejoin="round" />
<circle cx="768.5" cy="101" r="1.4" fill="#999"/>
<circle cx="759.5" cy="106" r="1.4" fill="#999"/>
<circle cx="768.5" cy="111" r="1.4" fill="#999"/>
<circle cx="777.5" cy="106" r="1.4" fill="#999"/>
<circle cx="759.5" cy="116.5" r="1.4" fill="#999"/>
<circle cx="768.5" cy="121.5" r="1.4" fill="#999"/>
<circle cx="777.5" cy="116.5" r="1.4" fill="#999"/>
<path d="M822.5,101.0 L831.5,106.0 L831.5,116.5 L822.5,121.5 L813.5,116.5 L813.5,106.0Z" fill="none" stroke="#6cc0ea" stroke-width="0.9" stroke-linecap="round" stroke-linejoin="round" />
<path d="M813.5,106.0 L822.5,111.5 L831.5,106.0" fill="none" stroke="#6cc0ea" stroke-width="0.9" stroke-linecap="round" stroke-linejoin="round" />
<path d="M822.5,101.0 L822.5,111.5 L822.5,121.5" fill="none" stroke="#6cc0ea" stroke-width="0.9" stroke-linecap="round" stroke-linejoin="round" />
<circle cx="822.5" cy="101" r="1.5" fill="#888"/>
<circle cx="813.5" cy="106" r="1.5" fill="#888"/>
<circle cx="822.5" cy="111.5" r="1.5" fill="#888"/>
<circle cx="831.5" cy="106" r="1.5" fill="#888"/>
<circle cx="813.5" cy="116.5" r="1.5" fill="#888"/>
<circle cx="822.5" cy="121.5" r="1.5" fill="#888"/>
<circle cx="831.5" cy="116.5" r="1.5" fill="#888"/>
<path d="M875.5,101.0 L884.5,106.0 L884.5,116.5 L875.5,121.5 L866.5,116.5 L866.5,106.0Z" fill="none" stroke="#8a8a8a" stroke-width="0.9" stroke-linecap="round" stroke-linejoin="round" />
<path d="M866.5,106.0 L875.5,111.0 L884.5,106.0" fill="none" stroke="#8a8a8a" stroke-width="0.9" stroke-linecap="round" stroke-linejoin="round" />
<path d="M875.5,111.0 L875.5,121.5" fill="none" stroke="#8a8a8a" stroke-width="0.9" stroke-linecap="round" stroke-linejoin="round" />
<circle cx="875.5" cy="101" r="1.8" fill="#9ad6f5"/>
<circle cx="866.5" cy="106" r="1.8" fill="#9ad6f5"/>
<circle cx="875.5" cy="111" r="1.8" fill="#9ad6f5"/>
<circle cx="884.5" cy="106" r="1.8" fill="#9ad6f5"/>
<circle cx="866.5" cy="116.5" r="1.8" fill="#9ad6f5"/>
<circle cx="875.5" cy="121.5" r="1.8" fill="#9ad6f5"/>
<circle cx="884.5" cy="116.5" r="1.8" fill="#9ad6f5"/>
<circle cx="931.5" cy="105" r="5.5" fill="#2b2b2b"/><rect x="930.8" y="105" width="1.4" height="15" fill="#2b2b2b"/><circle cx="931.5" cy="120.5" r="1.6" fill="#2b2b2b"/>
<rect x="977.5" y="103.5" width="15.5" height="11.5" fill="none" stroke="#2b2b2b" stroke-width="1.5" stroke-dasharray="3,2"/>
<path d="M989,111.5 L989,120 L991.2,118 L993,121.5 L994.5,120.8 L992.8,117.3 L995.8,117 Z" fill="#2b2b2b" stroke="none" stroke-width="1" stroke-linejoin="round" />
<path d="M1037.5,101.0 L1045.0,105.5 L1045.0,115.5 L1037.5,120.0 L1030.0,115.5 L1030.0,105.5Z" fill="none" stroke="#aaa" stroke-width="0.9" stroke-linecap="round" stroke-linejoin="round" />
<path d="M1030.0,105.5 L1037.5,110.0 L1045.0,105.5" fill="none" stroke="#aaa" stroke-width="0.9" stroke-linecap="round" stroke-linejoin="round" />
<path d="M1037.5,110.0 L1037.5,120.0" fill="none" stroke="#aaa" stroke-width="0.9" stroke-linecap="round" stroke-linejoin="round" />
<path d="M1033.5,106.5 V116.5 M1041.5,106.5 V116.5 M1030,110.5 L1037.5,115 L1045,110.5" fill="none" stroke="#bbb" stroke-width="0.6" stroke-linecap="round" stroke-linejoin="round" />
<circle cx="1037.5" cy="101" r="1.4" fill="#aaa"/>
<circle cx="1030.0" cy="105.5" r="1.4" fill="#aaa"/>
<circle cx="1037.5" cy="110.0" r="1.4" fill="#aaa"/>
<circle cx="1045.0" cy="105.5" r="1.4" fill="#aaa"/>
<circle cx="1030.0" cy="115.5" r="1.4" fill="#aaa"/>
<circle cx="1037.5" cy="120.0" r="1.4" fill="#aaa"/>
<circle cx="1045.0" cy="115.5" r="1.4" fill="#aaa"/>
<path d="M1088,118.5 V110 C1088,105.5 1091,102.2 1095,100.8 L1097.5,100 L1101.5,102.5 V113 L1092,118.8 Z" fill="none" stroke="#3a3030" stroke-width="1" stroke-linecap="round" stroke-linejoin="round" />
<path d="M1092,118.8 V110.5 C1092,106.5 1094,103.8 1097.5,102.3 M1092,110.5 L1101.5,104.5" fill="none" stroke="#3a3030" stroke-width="0.9" stroke-linecap="round" stroke-linejoin="round" />
<path d="M1088,113.5 L1081,117.5 L1083.5,120 L1088,117.2 M1083,116.3 L1085.3,118.6 M1085.2,115 L1087.5,117.3" fill="none" stroke="#3a3030" stroke-width="0.9" stroke-linecap="round" stroke-linejoin="round" /></svg>
<!-- nav cube -->
<svg class="abs" style="left:0;top:0" width="1604" height="898"><path d="M1471.1,721.4 L1530.7,747.2 L1533.8,806.0 L1489.0,844.0 L1427.8,818.2 L1426.5,759.4Z" fill="#fafafa" opacity="0.9"/>
<path d="M1471.9,777.8 L1471.1,721.4" fill="none" stroke="#bbb" stroke-width="1" stroke-linecap="round" stroke-linejoin="round" stroke-dasharray="3,2"/>
<path d="M1471.9,777.8 L1427.8,818.2" fill="none" stroke="#bbb" stroke-width="1" stroke-linecap="round" stroke-linejoin="round" stroke-dasharray="3,2"/>
<path d="M1471.9,777.8 L1533.8,806.0" fill="none" stroke="#bbb" stroke-width="1" stroke-linecap="round" stroke-linejoin="round" stroke-dasharray="3,2"/>
<text x="0" y="0" font-size="9.5" fill="#888" font-family="Liberation Sans" transform="translate(1436,803) rotate(22)">FRONT</text>
<text x="0" y="0" font-size="9" fill="#888" font-family="Liberation Sans" transform="translate(1475,762) rotate(-52)">LEFT</text>
<text x="0" y="0" font-size="9" fill="#888" font-style="italic" font-family="Liberation Sans" transform="translate(1505,803) rotate(-30)">TOP</text>
<path d="M1471.1,721.4 L1530.7,747.2 L1533.8,806.0 L1489.0,844.0 L1427.8,818.2 L1426.5,759.4Z" fill="none" stroke="#aaa" stroke-width="1.2" stroke-linecap="round" stroke-linejoin="round" />
<path d="M1426.5,759.4 L1487.0,783.9 L1530.7,747.2" fill="none" stroke="#aaa" stroke-width="1.2" stroke-linecap="round" stroke-linejoin="round" />
<path d="M1487.0,783.9 L1489.0,844.0" fill="none" stroke="#aaa" stroke-width="1.2" stroke-linecap="round" stroke-linejoin="round" />
<path d="M1421.6,821.9 L1418.5,738.0" fill="none" stroke="#6aa8c2" stroke-width="1.1" stroke-linecap="round" stroke-linejoin="round" />
<path d="M1418,731 L1415.5,740 L1421,740 Z" fill="#6aa8c2"/>
<path d="M1421.6,821.9 L1488.0,767.0" fill="none" stroke="#f6b67a" stroke-width="1.1" stroke-linecap="round" stroke-linejoin="round" />
<path d="M1491,764 L1482,766.5 L1485.5,771 Z" fill="#f6b67a"/>
<path d="M1421.6,821.9 L1508.0,858.0" fill="none" stroke="#3b82f0" stroke-width="1.1" stroke-linecap="round" stroke-linejoin="round" />
<path d="M1515,861 L1506,854.5 L1504,860 Z" fill="#3b82f0"/>
<text x="1412" y="726" font-size="17" fill="#6aa8c2" font-family="Liberation Sans">Y</text>
<text x="1493" y="763" font-size="16" fill="#f6b67a" font-family="Liberation Sans">X</text>
<text x="1521" y="872" font-size="16" fill="#3b82f0" font-family="Liberation Sans">Z</text>
<path d="M1477.5,691 L1482.5,686 L1487.5,691" fill="none" stroke="#555" stroke-width="1.3" stroke-linecap="round" stroke-linejoin="round" />
<path d="M1477.5,874.5 L1482.5,879.5 L1487.5,874.5" fill="none" stroke="#555" stroke-width="1.3" stroke-linecap="round" stroke-linejoin="round" />
<path d="M1391,777.5 L1386,782.5 L1391,787.5" fill="none" stroke="#555" stroke-width="1.3" stroke-linecap="round" stroke-linejoin="round" />
<path d="M1574,777.5 L1579,782.5 L1574,787.5" fill="none" stroke="#555" stroke-width="1.3" stroke-linecap="round" stroke-linejoin="round" />
<path d="M1537.5,722.5 L1543.5,716.5 L1549.5,722.5 M1539,721 V728 H1548 V721 M1542,728 V724.5 H1545 V728" fill="none" stroke="#555" stroke-width="1.1" stroke-linecap="round" stroke-linejoin="round" />
<path d="M1411.5,847 A6.2,6.2 0 1 0 1418,841.5" fill="none" stroke="#555" stroke-width="1.1" stroke-linecap="round" stroke-linejoin="round" />
<path d="M1407.5,846.5 L1412.5,843.5 L1413,849.5 Z" fill="#555"/>
<path d="M1549.5,847 A6.2,6.2 0 1 1 1543,841.5" fill="none" stroke="#555" stroke-width="1.1" stroke-linecap="round" stroke-linejoin="round" />
<path d="M1553.5,846.5 L1548.5,843.5 L1548,849.5 Z" fill="#555"/></svg>
<!-- scale bar -->
<div class="abs" style="left:503px;top:871px;width:284px;height:7px;border:2px solid #333;border-top:none"></div>
<div class="abs" style="left:626px;top:886px;font-size:15px;color:#444">0.2 m</div>
<!-- chat -->
<div class="abs" style="left:1520px;top:617px;width:60px;height:60px;border-radius:50%;background:#0074a9;box-shadow:0 1px 8px rgba(0,0,0,.18)"></div>
<svg class="abs" style="left:1530px;top:627px" width="40" height="40"><path d="M10,4.5 H30 Q33.5,4.5 33.5,8 V35 L27.5,31.5 H10 Q7,31.5 7,28.5 V8 Q7,4.5 10,4.5 Z" fill="#fff"/><path d="M11,23.5 Q20.5,30 30,23.5" fill="none" stroke="#0074a9" stroke-width="1.6" stroke-linecap="round"/></svg>
<!-- top toolbar -->
<div id="tb">
  <div class="abs" style="left:0;top:0;width:1604px;height:1px;background:#e6e6e6"></div>
  <div class="abs" style="left:0;top:71px;width:1604px;height:1px;background:#e0e0e0"></div>
  <div class="abs" style="left:432px;top:6px;width:50px;height:60px;background:#e2f0f7;border-radius:5px"></div>
  <div class="lbl" style="left:24px">Delete</div>
  <div class="lbl" style="left:79px">Move</div>
  <div class="lbl" style="left:134px">Extrude</div>
  <div class="sep" style="left:170px"></div>
  <div class="sec" style="left:208px">BODY</div>
  <div class="lbl" style="left:260px">Delete</div>
  <div class="lbl" style="left:324px">Close sheet</div>
  <div class="lbl" style="left:395px">Facet split</div>
  <div class="lbl" style="left:456px">Imprint</div>
  <div class="lbl" style="left:511px">Scale</div>
  <div class="lbl" style="left:566px">Split</div>
  <div class="lbl" style="left:625px">Boolean</div>
  <div class="lbl" style="left:705px">Transform</div>
  <div class="lbl" style="left:782px">Simplify</div>
  <div class="lbl" style="left:838px">Wrap</div>
  <div class="sep" style="left:874px"></div>
  <div class="sec" style="left:915.6px">MODEL</div>
  <div class="lbl" style="left:995px">Fix interferences</div>
  <div class="lbl" style="left:1077px">Add CAD</div>
  <div class="sep" style="left:1116px"></div>
  <div class="sec" style="left:1156.4px">TOOLS</div>
  <div class="lbl" style="left:1211px">Gaps</div>
  <div class="lbl" style="left:1280px">Interferences</div>
  <div class="abs" style="left:1344px;top:16px;width:148px;height:40px;border:1px solid #dcdcdc;border-radius:4px;background:#fff"></div>
  <div class="abs" style="left:1390px;top:27px;font-size:15px;letter-spacing:0.6px;color:#333">Delete draft</div>
  <div class="abs" style="left:1497px;top:16px;width:93px;height:40px;border-radius:4px;background:#0074a8"></div>
  <div class="abs" style="left:1541.5px;top:27px;font-size:15px;color:#fff">Save</div>
  <svg class="abs" style="left:0;top:0" width="1604" height="71"><path d="M23.0,17.5 L31.5,22.0 L23.0,26.5 L14.5,22.0 Z" fill="#f5f5f5" stroke="#b4b4b4" stroke-width="1.1" stroke-linejoin="round" />
<path d="M14.5,22.0 L23.0,26.5 L23.0,36.5 L14.5,32.0 Z" fill="#ececec" stroke="#b4b4b4" stroke-width="1.1" stroke-linejoin="round" />
<path d="M23.0,26.5 L31.5,22.0 L31.5,32.0 L23.0,36.5 Z" fill="#ececec" stroke="#b4b4b4" stroke-width="1.1" stroke-linejoin="round" />
<path d="M23.0,26.5 L31.5,22.0 L31.5,32.0 L23.0,36.5 Z" fill="#a6d2e5" stroke="#1b83b6" stroke-width="1.4" stroke-linejoin="round" />
<circle cx="31.5" cy="34.3" r="6.2" fill="#fff"/><circle cx="31.5" cy="34.3" r="5.2" fill="#0a73a8"/>
<path d="M29.2,32.0 L33.8,36.6" fill="none" stroke="#fff" stroke-width="1.4" stroke-linecap="round" stroke-linejoin="round" />
<path d="M33.8,32.0 L29.2,36.6" fill="none" stroke="#fff" stroke-width="1.4" stroke-linecap="round" stroke-linejoin="round" />
<path d="M77.0,17.0 L85.5,21.5 L85.5,31.5 L77.0,36.0 L68.5,31.5 L68.5,21.5 Z" fill="#f5f5f5" stroke="#b4b4b4" stroke-width="1" stroke-linejoin="round" />
<path d="M68.5,21.5 L77.0,26.0 L85.5,21.5" fill="none" stroke="#b4b4b4" stroke-width="1" stroke-linecap="round" stroke-linejoin="round" />
<path d="M77.0,26.0 L77.0,36.0" fill="none" stroke="#b4b4b4" stroke-width="1" stroke-linecap="round" stroke-linejoin="round" />
<path d="M77.0,17.0 L77.0,27.0" fill="none" stroke="#b4b4b4" stroke-width="0.7" stroke-linecap="round" stroke-linejoin="round" opacity="0.6"/>
<path d="M68.5,31.5 L77.0,27.0 L85.5,31.5" fill="none" stroke="#b4b4b4" stroke-width="0.7" stroke-linecap="round" stroke-linejoin="round" opacity="0.6"/>
<path d="M77.0,26.0 L85.5,21.5 L85.5,31.5 L77.0,36.0 Z" fill="#5aa9cf" stroke="#1b83b6" stroke-width="1.2" stroke-linejoin="round" />
<path d="M80.5,28.5 L88.5,33.0" fill="none" stroke="#1b83b6" stroke-width="1.6" stroke-linecap="round" stroke-linejoin="round" />
<path d="M89.5,33.8 L85.5,34.0 L87.5,31.0 Z" fill="#1b83b6" stroke="#1b83b6" stroke-width="1" stroke-linejoin="round" />
<path d="M131.0,16.0 L139.0,20.5 L139.0,30.5 L131.0,35.0 L123.0,30.5 L123.0,20.5 Z" fill="#f5f5f5" stroke="#b4b4b4" stroke-width="1" stroke-linejoin="round" />
<path d="M123.0,20.5 L131.0,25.0 L139.0,20.5" fill="none" stroke="#b4b4b4" stroke-width="1" stroke-linecap="round" stroke-linejoin="round" />
<path d="M131.0,25.0 L131.0,35.0" fill="none" stroke="#b4b4b4" stroke-width="1" stroke-linecap="round" stroke-linejoin="round" />
<path d="M131.0,16.0 L131.0,26.0" fill="none" stroke="#b4b4b4" stroke-width="0.7" stroke-linecap="round" stroke-linejoin="round" opacity="0.6"/>
<path d="M123.0,30.5 L131.0,26.0 L139.0,30.5" fill="none" stroke="#b4b4b4" stroke-width="0.7" stroke-linecap="round" stroke-linejoin="round" opacity="0.6"/>
<path d="M138.0,20.5 L145.0,24.5 L138.0,28.5 L131.0,24.5 Z" fill="#cbe6f1" stroke="#1b83b6" stroke-width="1.3" stroke-linejoin="round" />
<path d="M131.0,24.5 L138.0,28.5 L138.0,39.0 L131.0,35.0 Z" fill="#cbe6f1" stroke="#1b83b6" stroke-width="1.3" stroke-linejoin="round" />
<path d="M138.0,28.5 L145.0,24.5 L145.0,35.0 L138.0,39.0 Z" fill="#a6d2e5" stroke="#1b83b6" stroke-width="1.3" stroke-linejoin="round" />
<path d="M259.0,17.0 L268.0,21.8 L259.0,26.6 L250.0,21.8 Z" fill="#cbe6f1" stroke="#1b83b6" stroke-width="1.3" stroke-linejoin="round" />
<path d="M250.0,21.8 L259.0,26.6 L259.0,36.6 L250.0,31.8 Z" fill="#a6d2e5" stroke="#1b83b6" stroke-width="1.3" stroke-linejoin="round" />
<path d="M259.0,26.6 L268.0,21.8 L268.0,31.8 L259.0,36.6 Z" fill="#a6d2e5" stroke="#1b83b6" stroke-width="1.3" stroke-linejoin="round" />
<circle cx="267.8" cy="34.6" r="6.2" fill="#fff"/><circle cx="267.8" cy="34.6" r="5.2" fill="#0a73a8"/>
<path d="M265.5,32.3 L270.1,36.9" fill="none" stroke="#fff" stroke-width="1.4" stroke-linecap="round" stroke-linejoin="round" />
<path d="M270.1,32.3 L265.5,36.9" fill="none" stroke="#fff" stroke-width="1.4" stroke-linecap="round" stroke-linejoin="round" />
<path d="M322.0,16.0 L331.0,20.8 L322.0,25.6 L313.0,20.8 Z" fill="#f5f5f5" stroke="#b4b4b4" stroke-width="1.1" stroke-linejoin="round" />
<path d="M313.0,20.8 L322.0,25.6 L322.0,35.6 L313.0,30.8 Z" fill="#ececec" stroke="#b4b4b4" stroke-width="1.1" stroke-linejoin="round" />
<path d="M322.0,25.6 L331.0,20.8 L331.0,30.8 L322.0,35.6 Z" fill="#ececec" stroke="#b4b4b4" stroke-width="1.1" stroke-linejoin="round" />
<path d="M327.5,29.0 L337.0,23.5 L337.5,32.0 L328.0,37.5 Z" fill="#6bb4d6" stroke="#1b83b6" stroke-width="1.2" stroke-linejoin="round" />
<path d="M395.0,15.5 L404.0,20.0 L395.0,24.5 L386.0,20.0 Z" fill="#cbe6f1" stroke="#1b83b6" stroke-width="1.5" stroke-linejoin="round" />
<path d="M384.5,23.0 L393.5,27.5 L393.5,37.5 L384.5,33.0 Z" fill="#a6d2e5" stroke="#1b83b6" stroke-width="1.5" stroke-linejoin="round" />
<path d="M405.5,23.0 L396.5,27.5 L396.5,37.5 L405.5,33.0 Z" fill="#a6d2e5" stroke="#1b83b6" stroke-width="1.5" stroke-linejoin="round" />
<path d="M445.5,22.5 L458.5,15.0 L458.5,31.0 L445.5,38.5 Z" fill="#cbe6f1" stroke="#1b83b6" stroke-width="1.3" stroke-linejoin="round" />
<path d="M449.0,25.0 L455.5,21.5 L455.5,30.0 L449.0,33.5 Z" fill="#7fbedb" stroke="#1b83b6" stroke-width="1.1" stroke-linejoin="round" />
<path d="M461.5,24.0 L468.0,27.5 L461.5,31.0 L455.0,27.5 Z" fill="#f5f5f5" stroke="#b4b4b4" stroke-width="1" stroke-linejoin="round" />
<path d="M455.0,27.5 L461.5,31.0 L461.5,40.0 L455.0,36.5 Z" fill="#ececec" stroke="#b4b4b4" stroke-width="1" stroke-linejoin="round" />
<path d="M461.5,31.0 L468.0,27.5 L468.0,36.5 L461.5,40.0 Z" fill="#dedede" stroke="#b4b4b4" stroke-width="1" stroke-linejoin="round" />
<path d="M512.0,14.0 L523.5,20.5 L523.5,33.0 L512.0,39.5 L500.5,33.0 L500.5,20.5 Z" fill="none" stroke="#a8d3e6" stroke-width="0.8" stroke-linejoin="round" />
<path d="M512.0,19.0 L519.0,23.0 L512.0,27.0 L505.0,23.0 Z" fill="#cbe6f1" stroke="#1b83b6" stroke-width="1.5" stroke-linejoin="round" />
<path d="M505.0,23.0 L512.0,27.0 L512.0,35.5 L505.0,31.5 Z" fill="#a6d2e5" stroke="#1b83b6" stroke-width="1.5" stroke-linejoin="round" />
<path d="M512.0,27.0 L519.0,23.0 L519.0,31.5 L512.0,35.5 Z" fill="#a6d2e5" stroke="#1b83b6" stroke-width="1.5" stroke-linejoin="round" />
<path d="M558.0,22.0 L567.0,17.0 L567.0,33.0 L558.0,38.0 Z" fill="#dcdcdc" stroke="#bcbcbc" stroke-width="1" stroke-linejoin="round" />
<path d="M562.0,21.5 L576.0,14.5 L576.0,31.0 L562.0,38.5 Z" fill="#cbe6f1" stroke="#1b83b6" stroke-width="1.3" stroke-linejoin="round" />
<path d="M569.5,23.0 L575.5,26.2 L569.5,29.4 L563.5,26.2 Z" fill="#cbe6f1" stroke="#1b83b6" stroke-width="1.2" stroke-linejoin="round" />
<path d="M563.5,26.2 L569.5,29.4 L569.5,38.9 L563.5,35.7 Z" fill="#a6d2e5" stroke="#1b83b6" stroke-width="1.2" stroke-linejoin="round" />
<path d="M569.5,29.4 L575.5,26.2 L575.5,35.7 L569.5,38.9 Z" fill="#a6d2e5" stroke="#1b83b6" stroke-width="1.2" stroke-linejoin="round" />
<path d="M613.5,24.5 L625.0,18.0 L636.5,24.5 L636.5,31.0 L625.0,37.5 L613.5,31.0 Z" fill="#a6d2e5" stroke="#1b83b6" stroke-width="1.4" stroke-linejoin="round" />
<path d="M613.5,24.5 L625.0,31.0 L636.5,24.5" fill="none" stroke="#1b83b6" stroke-width="1.3" stroke-linecap="round" stroke-linejoin="round" />
<path d="M625.0,31.0 L625.0,37.5" fill="none" stroke="#1b83b6" stroke-width="1.3" stroke-linecap="round" stroke-linejoin="round" />
<path d="M619.0,23.5 L625.0,20.0 L631.0,23.5 L625.0,27.0 Z" fill="#cbe6f1" stroke="#1b83b6" stroke-width="1.2" stroke-linejoin="round" />
<path d="M619.0,27.0 L619.0,34.0" fill="none" stroke="#1b83b6" stroke-width="1.1" stroke-linecap="round" stroke-linejoin="round" />
<path d="M631.0,27.0 L631.0,34.0" fill="none" stroke="#1b83b6" stroke-width="1.1" stroke-linecap="round" stroke-linejoin="round" />
<path d="M704.5,22.0 L711.0,25.5 L704.5,29.0 L698.0,25.5 Z" fill="#cbe6f1" stroke="#1b83b6" stroke-width="1.4" stroke-linejoin="round" />
<path d="M698.0,25.5 L704.5,29.0 L704.5,36.5 L698.0,33.0 Z" fill="#a6d2e5" stroke="#1b83b6" stroke-width="1.4" stroke-linejoin="round" />
<path d="M704.5,29.0 L711.0,25.5 L711.0,33.0 L704.5,36.5 Z" fill="#a6d2e5" stroke="#1b83b6" stroke-width="1.4" stroke-linejoin="round" />
<path d="M704.5,21.0 L704.5,15.5" fill="none" stroke="#1b83b6" stroke-width="1.2" stroke-linecap="round" stroke-linejoin="round" />
<path d="M702.0,17.5 L704.5,14.5 L707.0,17.5 Z" fill="#1b83b6" stroke="#1b83b6" stroke-width="0.8" stroke-linejoin="round" />
<path d="M698.0,31.0 L694.5,34.0" fill="none" stroke="#6fb8da" stroke-width="1.1" stroke-linecap="round" stroke-linejoin="round" />
<path d="M711.0,31.0 L714.5,34.0" fill="none" stroke="#6fb8da" stroke-width="1.1" stroke-linecap="round" stroke-linejoin="round" />
<path d="M783.0,15.5 L793.0,21.0 L783.0,26.5 L773.0,21.0 Z" fill="#e3f2f8" stroke="#1b83b6" stroke-width="1.6" stroke-linejoin="round" />
<path d="M773.0,21.0 L783.0,26.5 L783.0,38.5 L773.0,33.0 Z" fill="#e3f2f8" stroke="#1b83b6" stroke-width="1.6" stroke-linejoin="round" />
<path d="M783.0,26.5 L793.0,21.0 L793.0,33.0 L783.0,38.5 Z" fill="#d8ecf5" stroke="#1b83b6" stroke-width="1.6" stroke-linejoin="round" />
<path d="M838.0,17.0 L847.0,22.0 L838.0,27.0 L829.0,22.0 Z" fill="#cbe6f1" stroke="#1b83b6" stroke-width="1.5" stroke-linejoin="round" />
<path d="M829.0,22.0 L838.0,27.0 L838.0,37.0 L829.0,32.0 Z" fill="#a6d2e5" stroke="#1b83b6" stroke-width="1.5" stroke-linejoin="round" />
<path d="M838.0,27.0 L847.0,22.0 L847.0,32.0 L838.0,37.0 Z" fill="#a6d2e5" stroke="#1b83b6" stroke-width="1.5" stroke-linejoin="round" />
<path d="M829.0,22.0 L838.0,32.0 L847.0,22.0" fill="none" stroke="#1b83b6" stroke-width="0.8" stroke-linecap="round" stroke-linejoin="round" opacity="0.6"/>
<path d="M829.0,32.0 L838.0,22.0" fill="none" stroke="#1b83b6" stroke-width="0.7" stroke-linecap="round" stroke-linejoin="round" opacity="0.5"/>
<path d="M994.0,17.5 L1006.0,17.5 L1006.0,33.5 L994.0,33.5 Z" fill="#fff" stroke="#1b83b6" stroke-width="1.5" stroke-linejoin="round" />
<path d="M986.5,22.5 L1001.0,22.5 L1001.0,36.5 L986.5,36.5 Z" fill="#fff" stroke="#1b83b6" stroke-width="1.5" stroke-linejoin="round" />
<path d="M1078.0,22.5 L1088.0,27.5 L1078.0,32.5 L1068.0,27.5 Z" fill="#f0f0f0" stroke="#b4b4b4" stroke-width="1" stroke-linejoin="round" />
<path d="M1068.0,27.5 L1078.0,32.5 L1078.0,40.0 L1068.0,35.0 Z" fill="#e6e6e6" stroke="#b4b4b4" stroke-width="1" stroke-linejoin="round" />
<path d="M1078.0,32.5 L1088.0,27.5 L1088.0,35.0 L1078.0,40.0 Z" fill="#dcdcdc" stroke="#b4b4b4" stroke-width="1" stroke-linejoin="round" />
<path d="M1073.0,13.5 L1079.5,17.0 L1073.0,20.5 L1066.5,17.0 Z" fill="#9ed0e6" stroke="#1b83b6" stroke-width="1.3" stroke-linejoin="round" />
<path d="M1066.5,17.0 L1073.0,20.5 L1073.0,29.0 L1066.5,25.5 Z" fill="#58a9d0" stroke="#1b83b6" stroke-width="1.3" stroke-linejoin="round" />
<path d="M1073.0,20.5 L1079.5,17.0 L1079.5,25.5 L1073.0,29.0 Z" fill="#7fbfdc" stroke="#1b83b6" stroke-width="1.3" stroke-linejoin="round" />
<rect x="1203.5" y="20.5" width="15" height="13" fill="#c4e1ee"/>
<path d="M1203.5,19.0 L1203.5,35.0" fill="none" stroke="#1b83b6" stroke-width="1.5" stroke-linecap="round" stroke-linejoin="round" />
<path d="M1218.5,19.0 L1218.5,35.0" fill="none" stroke="#1b83b6" stroke-width="1.5" stroke-linecap="round" stroke-linejoin="round" />
<path d="M1206.0,27.0 L1216.0,27.0" fill="none" stroke="#1b83b6" stroke-width="1.2" stroke-linecap="round" stroke-linejoin="round" />
<path d="M1208.0,25.0 L1206.0,27.0 L1208.0,29.0" fill="none" stroke="#1b83b6" stroke-width="1.1" stroke-linecap="round" stroke-linejoin="round" />
<path d="M1214.0,25.0 L1216.0,27.0 L1214.0,29.0" fill="none" stroke="#1b83b6" stroke-width="1.1" stroke-linecap="round" stroke-linejoin="round" />
<path d="M1278.5,17.5 L1290.5,17.5 L1290.5,29.5 L1278.5,29.5 Z" fill="#fff" stroke="#1b83b6" stroke-width="1.5" stroke-linejoin="round" />
<path d="M1271.5,22.5 L1285.5,22.5 L1285.5,36.5 L1271.5,36.5 Z" fill="none" stroke="#1b83b6" stroke-width="1.5" stroke-linejoin="round" />
<rect x="1279.3" y="23.3" width="5.4" height="5.4" fill="#a6d2e5"/>
<path d="M648.5,34.0 L653.0,38.5 L657.5,34.0" fill="none" stroke="#666" stroke-width="1.2" stroke-linecap="round" stroke-linejoin="round" />
<path d="M731.5,34.0 L736.0,38.5 L740.5,34.0" fill="none" stroke="#666" stroke-width="1.2" stroke-linecap="round" stroke-linejoin="round" />
<path d="M1365.5,31.5 H1378.5 M1369.5,31.5 V29.5 Q1369.5,28.7 1370.3,28.7 H1373.7 Q1374.5,28.7 1374.5,29.5 V31.5 M1367,31.5 L1367.8,43.3 H1376.2 L1377,31.5 M1370.2,34 V41 M1373.8,34 V41" fill="none" stroke="#5a5055" stroke-width="1"/>
<path d="M1517.5,36.0 L1522.0,40.5 L1531.5,31.5" fill="none" stroke="#fff" stroke-width="1.5" stroke-linecap="round" stroke-linejoin="round" /></svg>
</div>

<!-- left stub -->
<div class="abs" style="left:-10px;top:82px;width:13px;height:292px;background:#fff;border:1px solid #e2e2e2"></div>
<div class="abs" style="left:0;top:163px;width:2px;height:35px;background:#e3f1f8"></div>
<div class="abs" style="left:0;top:243px;width:2px;height:1px;background:#e2e2e2"></div>
<div class="abs" style="left:0;top:318px;width:2px;height:1px;background:#e2e2e2"></div>
<div class="abs" style="left:0;top:329px;width:2px;height:1px;background:#e2e2e2"></div>
<div class="abs" style="left:5px;top:218px;width:2px;height:20px;border-left:1px dotted #999;border-right:1px dotted #999;width:6px"></div>

<!-- imprint panel -->
<div class="abs" id="imp" style="left:13px;top:82px;width:437px;height:281px;background:#fff;border:1px solid #e4e4e4;box-shadow:0 2px 6px rgba(0,0,0,.05)">
  <div class="abs" style="left:16px;top:16px;font-size:18.5px;font-weight:bold;color:#2f2f2f">Imprint</div>
  <div class="abs" style="left:386px;top:7px;width:40px;height:40px;border:1px solid #dedede;border-radius:4px"></div>
  <svg class="abs" style="left:400px;top:21px" width="12" height="12"><path d="M1,1 L11,11 M11,1 L1,11" stroke="#666" stroke-width="1.1"/></svg>
  <div class="abs" style="left:0;top:55px;width:435px;height:1px;background:#e6e6e6"></div>
  <div class="abs" style="left:15px;top:78px;font-size:15px;font-weight:bold;color:#333">Bodies to imprint</div>
  <div class="abs" style="left:367px;top:78.5px;font-size:13.5px;color:#1b7db4">Clear list</div>
  <div class="abs" style="left:15px;top:106px;width:405px;height:102px;border:1.5px solid #36ade0;background:#e7f5fb"></div>
  <div class="abs item" style="left:26px;top:119px">Shell</div>
  <div class="abs item" style="left:26px;top:149px">Flow region</div>
  <div class="abs item" style="left:26px;top:179px">Flow region</div>
  <div class="abs xc" style="left:390px;top:117px"></div>
  <div class="abs xc" style="left:390px;top:147px"></div>
  <div class="abs xc" style="left:390px;top:177px"></div>
  <div class="abs" style="left:0;top:218px;width:435px;height:1px;background:#e6e6e6"></div>
  <div class="abs" style="left:13px;top:229px;width:40px;height:40px;border:1px solid #dedede;border-radius:4px"></div>
  <svg class="abs" style="left:25px;top:240px" width="16" height="18" viewBox="0 0 16 18"><path d="M1.5,3.5 H14.5 M5.5,3.5 V1.5 H10.5 V3.5 M3,3.5 L3.8,16.5 H12.2 L13,3.5 M6.2,6 V14 M9.8,6 V14" fill="none" stroke="#666" stroke-width="1"/></svg>
  <div class="abs" style="left:313px;top:229px;width:110px;height:40px;border-radius:4px;background:#0074a8;color:#fff;font-size:15px;font-weight:bold;text-align:center;line-height:40px">Apply</div>
</div>

<!-- right panel -->
<div class="abs" style="left:1292px;top:193px;width:6px;height:20px;border-left:1px dotted #a0a0a0;border-right:1px dotted #a0a0a0"></div>
<div class="abs" id="geo" style="left:1300px;top:82px;width:295px;height:242px;background:#fff;border:1px solid #e4e4e4;box-shadow:0 2px 6px rgba(0,0,0,.05)">
  <svg class="abs" style="left:17px;top:18px" width="12" height="8"><path d="M1,1 L6,6 L11,1" fill="none" stroke="#666" stroke-width="1.3"/></svg>
  <div class="abs" style="left:40px;top:14px;font-size:15.4px;color:#333">GEOMETRY</div>
  <div class="abs" style="left:0;top:45px;width:292px;height:140px;background:#e7f4fb"></div>
  <div class="abs" style="left:24px;top:45px;width:1px;height:11px;background:#b9cbd6"></div>
  <div class="abs" style="left:17px;top:56px;width:12px;height:13px;background:#fff;border:1px solid #d5d5d5"></div>
  <div class="abs" style="left:19.5px;top:62px;width:7px;height:2px;background:#333"></div>
  <div class="abs" style="left:40px;top:53px;font-size:15px;font-weight:bold;color:#34abdb">Heat_Exchanger - Copy</div>
  <div class="abs" style="left:54px;top:82px;width:1px;height:86px;background:#bfd2dc"></div>
  <div class="abs" style="left:55px;top:98px;width:6px;height:1px;background:#cfdde5"></div>
  <div class="abs" style="left:55px;top:133px;width:6px;height:1px;background:#cfdde5"></div>
  <div class="abs" style="left:55px;top:168px;width:6px;height:1px;background:#cfdde5"></div>
  <svg class="abs cube" style="left:73px;top:87.5px" width="19" height="20" viewBox="0 0 19 20"><path d="M9.5,0.5 L18,4.5 L9.5,8.5 L1,4.5 Z" fill="#e4e4e4"/><path d="M9.5,8.5 L18,4.5 L18,15 L9.5,19.5 Z" fill="#d2d2d2"/><path d="M1,4.5 L9.5,8.5 L9.5,19.5 L1,15 Z" fill="#8c8c8c"/></svg>
  <svg class="abs cube" style="left:73px;top:122.5px" width="19" height="20" viewBox="0 0 19 20"><path d="M9.5,0.5 L18,4.5 L9.5,8.5 L1,4.5 Z" fill="#e4e4e4"/><path d="M9.5,8.5 L18,4.5 L18,15 L9.5,19.5 Z" fill="#d2d2d2"/><path d="M1,4.5 L9.5,8.5 L9.5,19.5 L1,15 Z" fill="#8c8c8c"/></svg>
  <svg class="abs cube" style="left:73px;top:157.5px" width="19" height="20" viewBox="0 0 19 20"><path d="M9.5,0.5 L18,4.5 L9.5,8.5 L1,4.5 Z" fill="#e4e4e4"/><path d="M9.5,8.5 L18,4.5 L18,15 L9.5,19.5 Z" fill="#d2d2d2"/><path d="M1,4.5 L9.5,8.5 L9.5,19.5 L1,15 Z" fill="#8c8c8c"/></svg>
  <div class="abs gi" style="left:100px;top:89px">Shell</div>
  <div class="abs gi" style="left:100px;top:124px">Flow region</div>
  <div class="abs gi" style="left:100px;top:159px">Flow region</div>
  <div class="abs" style="left:0;top:195px;width:292px;height:1px;background:#e6e6e6"></div>
  <div class="abs" style="left:15px;top:210px;font-size:15px;color:#333">Show faces</div>
  <div class="abs" style="left:250px;top:213px;width:28px;height:10px;border-radius:5px;background:#f2f2f2;border:1px solid #e2e2e2"></div>
  <div class="abs" style="left:248px;top:208px;width:20px;height:20px;border-radius:50%;background:#fff;border:1px solid #bdbdbd;box-shadow:0 1px 3px rgba(0,0,0,.12)"></div>
</div>

<!-- badges -->
<div class="badge" style="left:436px;top:66px">1</div>
<div class="badge" style="left:1516px;top:188px">2</div>
<div class="badge" style="left:274px;top:312px">3</div>
<div class="badge" style="left:1526px;top:44px">4</div>
</body></html>
